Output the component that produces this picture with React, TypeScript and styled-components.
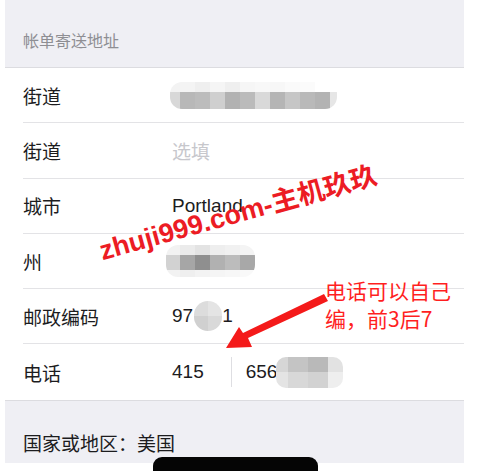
import React from "react";
import styled, { createGlobalStyle } from "styled-components";

const Global = createGlobalStyle`
  html, body { margin: 0; padding: 0; background: #ffffff; }
  body { font-family: "Liberation Sans", "Noto Sans CJK SC", sans-serif; }
`;

const Page = styled.div`
  position: relative;
  width: 491px;
  height: 471px;
  overflow: hidden;
  background: #ffffff;
`;

const Sheet = styled.div`
  width: 459px;
  margin-left: 5px;
  display: flex;
  flex-direction: column;
`;

const SectionHeader = styled.div`
  height: 68px;
  box-sizing: border-box;
  background: #efeff4;
  border-bottom: 1px solid #dcdce0;
  display: flex;
  align-items: flex-end;
  padding: 0 0 15px 18px;
  font-size: 16px;
  color: #8e8e93;
  font-family: "Noto Sans CJK SC", sans-serif;
`;

const List = styled.div`
  display: flex;
  flex-direction: column;
  background: #ffffff;
  border-bottom: 1px solid #dcdce0;
`;

const Row = styled.div<{ $last?: boolean }>`
  height: 55.3px;
  box-sizing: border-box;
  margin-left: 18px;
  display: flex;
  align-items: center;
  border-bottom: ${(p) => (p.$last ? "none" : "1px solid #e3e3e6")};
`;

const Label = styled.div`
  width: 149px;
  flex: none;
  font-size: 19px;
  color: #1c1c1e;
  font-family: "Noto Sans CJK SC", sans-serif;
`;

const Value = styled.div<{ $placeholder?: boolean }>`
  display: flex;
  align-items: center;
  font-size: 19px;
  color: ${(p) => (p.$placeholder ? "#c7c7cc" : "#1c1c1e")};
  font-family: "Liberation Sans", "Noto Sans CJK SC", sans-serif;
`;

const Divider = styled.div`
  width: 1px;
  height: 30px;
  background: #dedee2;
  margin: 0 14px 0 27px;
`;

const Mosaic = styled.div<{ $radius: number }>`
  display: flex;
  flex-direction: column;
  border-radius: ${(p) => p.$radius}px;
  overflow: hidden;
`;

const MosaicRow = styled.div<{ $h: number }>`
  display: flex;
  height: ${(p) => p.$h}px;
`;

const Cell = styled.div<{ $w: number; $c: string }>`
  width: ${(p) => p.$w}px;
  background: ${(p) => p.$c};
`;

const Footer = styled.div`
  height: 62px;
  box-sizing: border-box;
  background: #efeff4;
  padding: 29px 0 0 18px;
  font-size: 19px;
  color: #1c1c1e;
  font-family: "Noto Sans CJK SC", sans-serif;
  line-height: 26px;
`;

const HomeBar = styled.div`
  position: absolute;
  left: 153px;
  top: 457px;
  width: 165px;
  height: 30px;
  background: #050505;
  border-radius: 9px 9px 0 0;
`;

const Watermark = styled.div`
  position: absolute;
  left: 104px;
  top: 236px;
  font-size: 27px;
  line-height: 30px;
  font-weight: bold;
  color: #ec1c24;
  white-space: nowrap;
  font-family: "Liberation Sans", "Noto Sans CJK SC", sans-serif;
  transform-origin: 0 100%;
  transform: rotate(-15.5deg);
`;

const Note = styled.div`
  position: absolute;
  left: 325px;
  top: 276px;
  font-size: 21px;
  line-height: 28px;
  color: #ff1f1f;
  font-family: "Noto Sans CJK SC", sans-serif;
`;

const ArrowLayer = styled.svg`
  position: absolute;
  left: 0;
  top: 0;
  pointer-events: none;
`;

type Block = { h: number; cells: [number, string][] };

const Blob: React.FC<{ rows: Block[]; radius: number; offset?: number }> = ({ rows, radius, offset }) => (
  <Mosaic $radius={radius} style={offset ? { marginLeft: offset } : undefined}>
    {rows.map((r, i) => (
      <MosaicRow key={i} $h={r.h}>
        {r.cells.map(([w, c], j) => (
          <Cell key={j} $w={w} $c={c} />
        ))}
      </MosaicRow>
    ))}
  </Mosaic>
);

const streetBlob: Block[] = [
  {
    h: 10,
    cells: [
      [10, "#f3f3f3"], [15, "#f4f4f4"], [15, "#efefef"], [15, "#f5f5f5"], [15, "#efefef"],
      [15, "#f6f6f6"], [15, "#f8f8f8"], [15, "#f7f7f7"], [15, "#fafafa"], [15, "#fbfbfb"],
      [15, "#ffffff"], [7, "#ffffff"],
    ],
  },
  {
    h: 17,
    cells: [
      [10, "#d8d8d8"], [15, "#b8b8b8"], [15, "#bcbcbc"], [15, "#cfcfcf"], [15, "#b2b2b2"],
      [15, "#bbbbbb"], [15, "#d9d9d9"], [15, "#b5b5b5"], [15, "#c6c6c6"], [15, "#b9b9b9"],
      [15, "#b3b3b3"], [7, "#e6e6e6"],
    ],
  },
];

const stateBlob: Block[] = [
  { h: 10, cells: [[14, "#f2f2f2"], [15, "#ebebeb"], [15, "#e3e3e3"], [15, "#eeeeee"], [15, "#f1f1f1"], [15, "#f4f4f4"]] },
  { h: 15, cells: [[14, "#d2d2d2"], [15, "#a6a6a6"], [15, "#8f8f8f"], [15, "#b1b1b1"], [15, "#bcbcbc"], [15, "#a8a8a8"]] },
  { h: 7, cells: [[14, "#f2f2f2"], [15, "#efefef"], [15, "#f3f3f3"], [15, "#f5f5f5"], [15, "#f7f7f7"], [15, "#f9f9f9"]] },
];

const zipBlob: Block[] = [
  { h: 15, cells: [[14, "#dcdcdc"], [14, "#e4e4e4"]] },
  { h: 15, cells: [[14, "#d0d0d0"], [14, "#d9d9d9"]] },
];

const phoneBlob: Block[] = [
  { h: 15, cells: [[12, "#d6d6d6"], [20, "#c4c4c4"], [20, "#b9b9b9"], [15, "#e2e2e2"]] },
  { h: 16, cells: [[12, "#e4e4e4"], [20, "#d8d8d8"], [20, "#d2d2d2"], [15, "#eeeeee"]] },
];

export default function App() {
  return (
    <Page>
      <Global />
      <Sheet>
        <SectionHeader>帐单寄送地址</SectionHeader>
        <List>
          <Row>
            <Label>街道</Label>
            <Value>
              <Blob rows={streetBlob} radius={12} offset={-2} />
            </Value>
          </Row>
          <Row>
            <Label>街道</Label>
            <Value $placeholder>选填</Value>
          </Row>
          <Row>
            <Label>城市</Label>
            <Value>Portland</Value>
          </Row>
          <Row>
            <Label>州</Label>
            <Value>
              <Blob rows={stateBlob} radius={12} offset={-6} />
            </Value>
          </Row>
          <Row>
            <Label>邮政编码</Label>
            <Value>
              97
              <Blob rows={zipBlob} radius={14} offset={1} />
              1
            </Value>
          </Row>
          <Row $last>
            <Label>电话</Label>
            <Value>
              415
              <Divider />
              656
              <Blob rows={phoneBlob} radius={10} offset={-1} />
            </Value>
          </Row>
        </List>
        <Footer>国家或地区：美国</Footer>
      </Sheet>
      <HomeBar />
      <Watermark>zhuji999.com-主机玖玖</Watermark>
      <Note>
        电话可以自己
        <br />
        编，前3后7
      </Note>
      <ArrowLayer width={491} height={471} viewBox="0 0 491 471">
        <polygon points="324,294 328,301 248,338 252,347 226,348 239,327 243,333" fill="#f41a1a" />
      </ArrowLayer>
    </Page>
  );
}
